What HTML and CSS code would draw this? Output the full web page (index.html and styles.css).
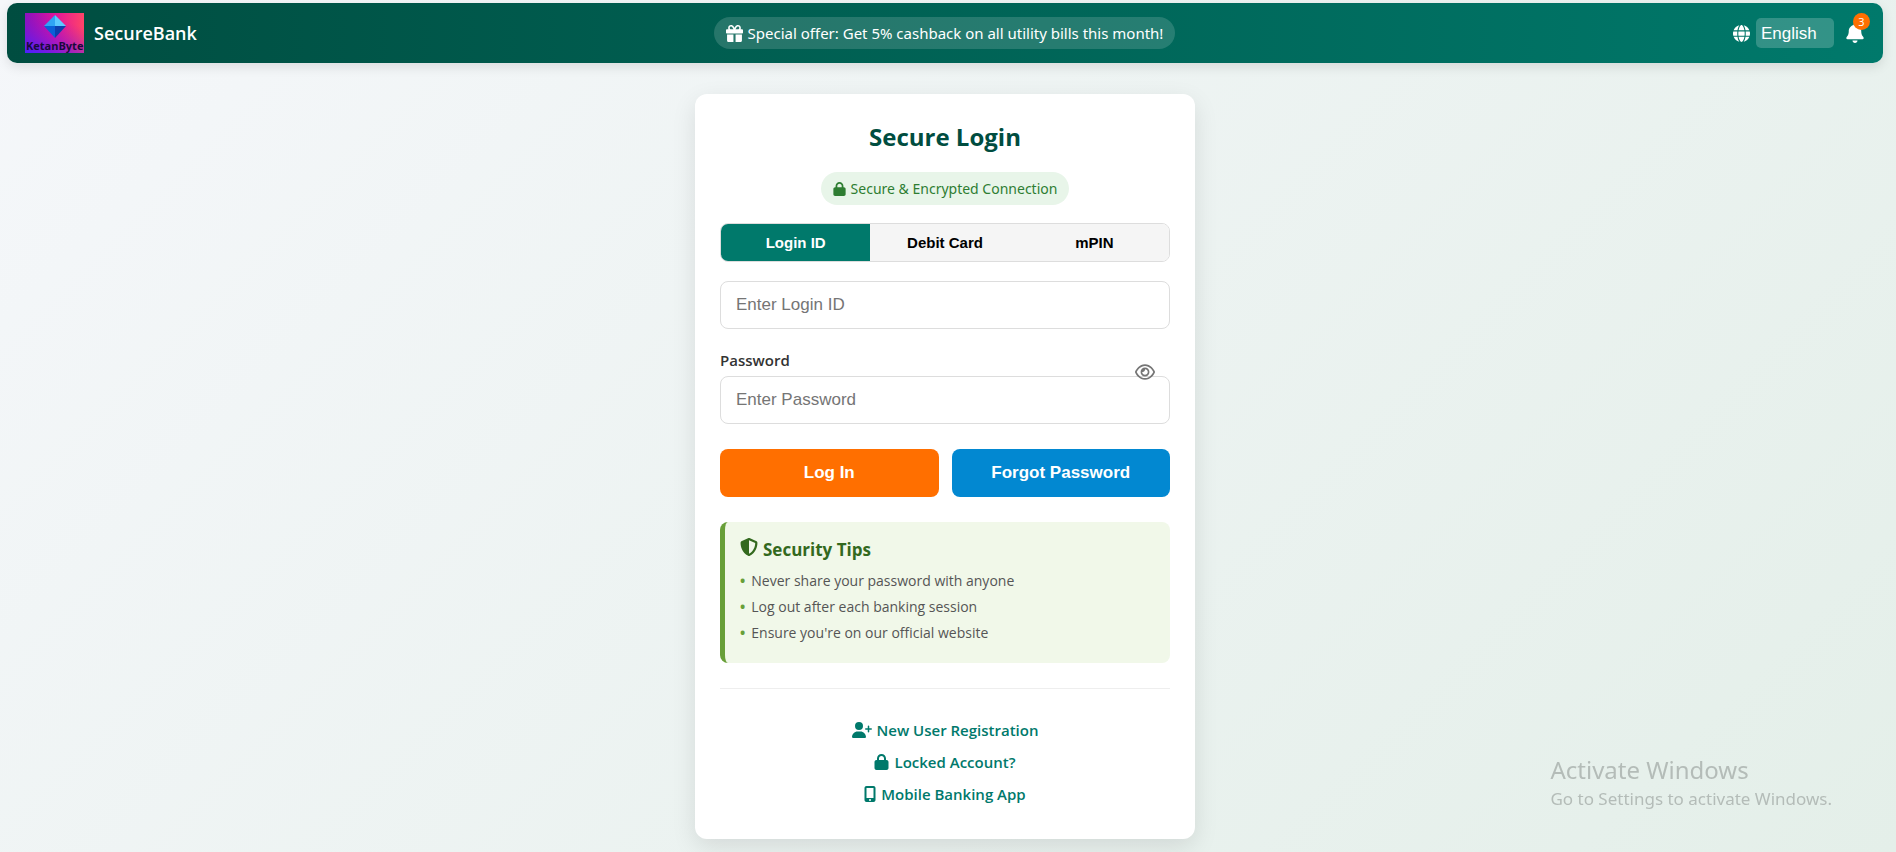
FILE: index.html
```html
<!DOCTYPE html>
<html lang="en">
<head>
    <meta charset="UTF-8">
    <meta name="viewport" content="width=device-width, initial-scale=1.0">
    <title>SecureBank - Login</title>
    <link rel="stylesheet" href="styles.css">
</head>
<body>
    <header class="header">
        <div class="brand">
            <svg class="logo" viewBox="0 0 59 40" role="img" aria-label="KetanByte">
                <defs>
                    <linearGradient id="logo-bg" x1="0" y1="0" x2="1" y2="0">
                        <stop offset="0" stop-color="#8a12b8"/>
                        <stop offset="0.5" stop-color="#e0139c"/>
                        <stop offset="1" stop-color="#ff4468"/>
                    </linearGradient>
                    <linearGradient id="logo-shade" x1="0" y1="1" x2="0.6" y2="0">
                        <stop offset="0" stop-color="#4a22ff"/>
                        <stop offset="0.9" stop-color="#a010c8" stop-opacity="0"/>
                    </linearGradient>
                </defs>
                <rect width="59" height="40" fill="url(#logo-bg)"/>
                <rect width="59" height="40" fill="url(#logo-shade)"/>
                <path d="M30 2L19 13H30Z" fill="#2fa4f5"/>
                <path d="M30 2L41 13H30Z" fill="#5cc8ff"/>
                <path d="M19 13L30 25V13Z" fill="#0a5fd8"/>
                <path d="M41 13L30 25V13Z" fill="#0c3fae"/>
                <text class="logo-text" x="1" y="37">KetanByte</text>
            </svg>
            <span class="brand-name">SecureBank</span>
        </div>
        <div class="offer">
            <svg class="icon" viewBox="0 0 512 512" aria-hidden="true"><path d="M190.500 68.800L225.300 128H224 152c-22.100 0-40-17.900-40-40s17.900-40 40-40h2.200c14.900 0 28.800 7.900 36.300 20.800zM64 88c0 14.400 3.500 28 9.600 40H32c-17.700 0-32 14.300-32 32v64c0 17.700 14.300 32 32 32H480c17.700 0 32-14.300 32-32V160c0-17.700-14.300-32-32-32H438.400c6.100-12 9.600-25.600 9.600-40c0-48.600-39.400-88-88-88h-2.200c-31.900 0-61.500 16.900-77.700 44.400L256 85.500l-24.100-41C215.700 16.900 186.100 0 154.200 0H152C103.400 0 64 39.400 64 88zm336 0c0 22.100-17.900 40-40 40H288h-1.300l34.800-59.200C329.100 55.900 342.900 48 357.800 48H360c22.100 0 40 17.900 40 40zM32 288V464c0 26.500 21.500 48 48 48H224V288H32zM288 512H432c26.500 0 48-21.500 48-48V288H288V512z"/></svg>
            <span>Special offer: Get 5% cashback on all utility bills this month!</span>
        </div>
        <div class="header-right">
            <svg class="icon" viewBox="0 0 512 512" aria-hidden="true"><path d="M352 256c0 22.200-1.200 43.600-3.300 64H163.300c-2.200-20.400-3.300-41.800-3.300-64s1.200-43.600 3.300-64H348.700c2.200 20.400 3.300 41.800 3.300 64zm28.800-64H503.900c5.300 20.500 8.100 41.900 8.100 64s-2.800 43.500-8.100 64H380.800c2.100-20.600 3.200-42 3.200-64s-1.100-43.400-3.200-64zm112.600-32H376.700c-10-63.900-29.800-117.400-55.300-151.600c78.300 20.700 142 77.500 171.900 151.600zm-149.100 0H167.700c6.100-36.400 15.500-68.600 27-94.700c10.500-23.600 22.200-40.700 33.500-51.500C239.400 3.200 248.700 0 256 0s16.600 3.200 27.800 13.800c11.300 10.800 23 27.900 33.500 51.500c11.600 26 20.900 58.200 27 94.700zm-209 0H18.600C48.600 85.900 112.200 29.100 190.600 8.400C165.100 42.600 145.300 96.100 135.300 160zM8.100 192H131.200c-2.100 20.600-3.200 42-3.200 64s1.100 43.400 3.200 64H8.100C2.800 299.500 0 278.100 0 256s2.800-43.500 8.100-64zM194.700 446.600c-11.600-26-20.900-58.200-27-94.600H344.300c-6.100 36.400-15.500 68.600-27 94.600c-10.500 23.600-22.200 40.700-33.500 51.500C272.600 508.800 263.300 512 256 512s-16.600-3.200-27.800-13.800c-11.300-10.800-23-27.900-33.500-51.500zM135.300 352c10 63.900 29.800 117.400 55.300 151.600C112.200 482.900 48.600 426.100 18.600 352H135.300zm358.100 0c-30 74.100-93.600 130.900-171.900 151.600c25.500-34.200 45.200-87.700 55.300-151.600H493.400z"/></svg>
            <select class="language" aria-label="Language">
                <option>English</option>
                <option>Hindi</option>
            </select>
            <button class="bell" type="button" aria-label="Notifications">
                <svg class="bell-icon" viewBox="0 0 448 512" aria-hidden="true"><path d="M224 0c-17.700 0-32 14.300-32 32V51.200C119 66 64 130.600 64 208v18.800c0 47-17.300 92.400-48.500 127.600l-7.400 8.300c-8.400 9.400-10.400 22.900-5.300 34.400S19.400 416 32 416H416c12.600 0 24-7.400 29.200-18.900s3.100-25-5.300-34.400l-7.400-8.300C401.300 319.200 384 273.900 384 226.800V208c0-77.400-55-142-128-156.800V32c0-17.700-14.300-32-32-32zm45.300 493.300c12-12 18.700-28.300 18.700-45.300H160c0 17 6.700 33.300 18.700 45.300s28.300 18.700 45.300 18.700s33.300-6.700 45.300-18.700z"/></svg>
                <span class="badge">3</span>
            </button>
        </div>
    </header>

    <main class="card">
        <h1 class="title">Secure Login</h1>
        <div class="secure-badge">
            <svg class="icon-lock" viewBox="0 0 448 512" aria-hidden="true"><path d="M144 144v48H304V144c0-44.200-35.800-80-80-80s-80 35.800-80 80zM80 192V144C80 64.500 144.500 0 224 0s144 64.500 144 144v48h16c35.300 0 64 28.700 64 64V448c0 35.300-28.700 64-64 64H64c-35.300 0-64-28.700-64-64V256c0-35.300 28.700-64 64-64H80z"/></svg>
            <span>Secure &amp; Encrypted Connection</span>
        </div>

        <div class="tabs">
            <button class="tab active" type="button">Login ID</button>
            <button class="tab" type="button">Debit Card</button>
            <button class="tab" type="button">mPIN</button>
        </div>

        <form class="login-form">
            <input class="field" type="text" id="login-id" placeholder="Enter Login ID" aria-label="Login ID">
            <div class="password-group">
                <label class="label" for="password">Password</label>
                <input class="field" type="password" id="password" placeholder="Enter Password">
                <button class="toggle-password" type="button" aria-label="Show password">
                    <svg class="eye-icon" viewBox="0 0 576 512" aria-hidden="true"><path d="M288 80c-65.200 0-118.800 29.600-159.900 67.700C89.600 183.500 63 226 49.400 256c13.600 30 40.200 72.500 78.600 108.300C169.200 402.400 222.800 432 288 432s118.800-29.600 159.900-67.700C486.400 328.500 513 286 526.600 256c-13.600-30-40.200-72.500-78.600-108.300C406.800 109.600 353.200 80 288 80zM95.400 112.600C142.500 68.800 207.200 32 288 32s145.500 36.800 192.600 80.600c46.800 43.500 78.100 95.400 93 131.100c3.300 7.900 3.300 16.700 0 24.600c-14.900 35.700-46.200 87.700-93 131.100C433.500 443.200 368.800 480 288 480s-145.500-36.800-192.600-80.600C48.600 356 17.300 304 2.500 268.300c-3.300-7.900-3.300-16.700 0-24.600C17.300 208 48.600 156 95.400 112.600zM288 336c44.200 0 80-35.800 80-80s-35.800-80-80-80c-.7 0-1.300 0-2 0c1.300 5.100 2 10.500 2 16c0 35.300-28.700 64-64 64c-5.500 0-10.900-.7-16-2c0 .7 0 1.300 0 2c0 44.200 35.800 80 80 80zm0-208a128 128 0 1 1 0 256 128 128 0 1 1 0-256z"/></svg>
                </button>
            </div>
            <div class="buttons">
                <button class="btn btn-login" type="submit">Log In</button>
                <button class="btn btn-forgot" type="button">Forgot Password</button>
            </div>
        </form>

        <section class="tips">
            <h2 class="tips-title">
                <svg class="shield-icon" viewBox="0 0 512 512" aria-hidden="true"><path d="M256 0c4.600 0 9.200 1 13.400 2.900L457.700 82.800c22 9.300 38.400 31 38.300 57.200c-.5 99.200-41.300 280.700-213.600 363.200c-16.700 8-36.100 8-52.800 0C57.300 420.700 16.500 239.200 16 140c-.1-26.200 16.300-47.900 38.300-57.200L242.700 2.900C246.800 1 251.400 0 256 0zm0 66.800V444.800C394 378 431.100 230.100 432 141.400L256 66.800l0 0z"/></svg>
                <span>Security Tips</span>
            </h2>
            <ul class="tips-list">
                <li>Never share your password with anyone</li>
                <li>Log out after each banking session</li>
                <li>Ensure you're on our official website</li>
            </ul>
        </section>

        <nav class="links">
            <a href="#">
                <svg class="icon-wide" viewBox="0 0 640 512" aria-hidden="true"><path d="M96 128a128 128 0 1 1 256 0A128 128 0 1 1 96 128zM0 482.300C0 383.800 79.800 304 178.300 304h91.400C368.200 304 448 383.800 448 482.300c0 16.400-13.300 29.700-29.700 29.700H29.700C13.300 512 0 498.700 0 482.300zM504 312V248H440c-13.300 0-24-10.700-24-24s10.700-24 24-24h64V136c0-13.300 10.700-24 24-24s24 10.700 24 24v64h64c13.300 0 24 10.700 24 24s-10.700 24-24 24H552v64c0 13.300-10.700 24-24 24s-24-10.700-24-24z"/></svg>
                <span>New User Registration</span>
            </a>
            <a href="#">
                <svg class="icon-narrow" viewBox="0 0 448 512" aria-hidden="true"><path d="M144 144v48H304V144c0-44.200-35.800-80-80-80s-80 35.800-80 80zM80 192V144C80 64.500 144.500 0 224 0s144 64.500 144 144v48h16c35.300 0 64 28.700 64 64V448c0 35.300-28.700 64-64 64H64c-35.300 0-64-28.700-64-64V256c0-35.300 28.700-64 64-64H80z"/></svg>
                <span>Locked Account?</span>
            </a>
            <a href="#">
                <svg class="icon-phone" viewBox="0 0 384 512" aria-hidden="true"><path d="M16 64C16 28.700 44.700 0 80 0H304c35.300 0 64 28.700 64 64V448c0 35.300-28.700 64-64 64H80c-35.300 0-64-28.700-64-64V64zM224 448a32 32 0 1 0-64 0 32 32 0 1 0 64 0zM304 64H80V384H304V64z"/></svg>
                <span>Mobile Banking App</span>
            </a>
        </nav>
    </main>

    <aside class="watermark">
        <p class="watermark-title">Activate Windows</p>
        <p class="watermark-text">Go to Settings to activate Windows.</p>
    </aside>
</body>
</html>
```
FILE: styles.css
```css
* {
    box-sizing: border-box;
}
body {
    font-family: "Open Sans", "Noto Sans", sans-serif;
    background: linear-gradient(135deg, #f5f7fa 0%, #e4efe9 100%);
    min-height: 100vh;
    margin: 0;
    padding: 3px 13px 13px 7px;
    color: #333;
}
svg {
    fill: currentColor;
    flex-shrink: 0;
}
.header {
    display: grid;
    grid-template-columns: 1fr auto 1fr;
    align-items: center;
    height: 60px;
    padding: 0 19px 0 18px;
    border-radius: 10px;
    background: linear-gradient(90deg, #004d40, #00796b);
    color: #fff;
    box-shadow: 0 4px 12px rgba(0, 0, 0, 0.1);
}
.brand {
    display: flex;
    align-items: center;
    gap: 10px;
}
.logo {
    width: 59px;
    height: 40px;
}
.logo-text {
    font-family: "Open Sans", sans-serif;
    font-size: 11px;
    font-weight: 700;
    fill: #1a0a3c;
}
.brand-name {
    font-size: 18px;
    font-weight: 600;
}
.offer {
    display: flex;
    align-items: center;
    gap: 5px;
    height: 32px;
    padding: 0 12px;
    border-radius: 20px;
    background: rgba(255, 255, 255, 0.15);
    font-family: "Noto Sans", sans-serif;
    font-size: 15px;
}
.icon {
    width: 17px;
    height: 17px;
}
.header-right {
    display: flex;
    justify-content: flex-end;
    align-items: center;
    gap: 6px;
}
.language {
    appearance: none;
    width: 78px;
    height: 30px;
    padding: 0 5px;
    border: none;
    border-radius: 5px;
    background: rgba(255, 255, 255, 0.2);
    color: #fff;
    font-family: "Liberation Sans", Arial, sans-serif;
    font-size: 17px;
}
.language option {
    color: #333;
}
.bell {
    position: relative;
    display: flex;
    margin-left: 6px;
    padding: 0;
    border: none;
    background: none;
    color: #fff;
    cursor: pointer;
}
.bell-icon {
    width: 18px;
    height: 20px;
}
.badge {
    position: absolute;
    top: -10px;
    right: -6px;
    width: 17px;
    height: 17px;
    border-radius: 50%;
    background: #ff6f00;
    font-family: "Open Sans", sans-serif;
    font-size: 11px;
    line-height: 17px;
    text-align: center;
}
.card {
    display: flex;
    flex-direction: column;
    max-width: 500px;
    margin: 31px auto 0;
    padding: 25px;
    border-radius: 12px;
    background: #fff;
    box-shadow: 0 8px 24px rgba(0, 0, 0, 0.1);
}
.title {
    margin: 0 0 18px;
    color: #004d40;
    font-size: 24px;
    font-weight: 700;
    line-height: 35px;
    text-align: center;
}
.secure-badge {
    display: flex;
    align-items: center;
    align-self: center;
    gap: 5px;
    height: 33px;
    margin-bottom: 18px;
    padding: 0 12px;
    border-radius: 20px;
    background: #e8f5e9;
    color: #2e7d32;
    font-family: "Noto Sans", sans-serif;
    font-size: 14px;
}
.icon-lock {
    width: 13px;
    height: 14px;
}
.tabs {
    display: flex;
    height: 39px;
    margin-bottom: 19px;
    overflow: hidden;
    border: 1px solid #ddd;
    border-radius: 8px;
}
.tab {
    flex: 1;
    border: none;
    background: #f5f5f5;
    color: #000;
    font-family: "Liberation Sans", Arial, sans-serif;
    font-size: 15px;
    font-weight: 700;
    cursor: pointer;
}
.tab.active {
    background: #00796b;
    color: #fff;
}
.field {
    display: block;
    width: 100%;
    height: 48px;
    padding: 0 15px;
    border: 1px solid #ddd;
    border-radius: 8px;
    background: #fff;
    font-family: "Liberation Sans", Arial, sans-serif;
    font-size: 17px;
}
.field::placeholder {
    color: #757575;
}
.password-group {
    position: relative;
    margin: 20px 0 25px;
}
.label {
    display: block;
    height: 27px;
    font-size: 15px;
    font-weight: 600;
    line-height: 22px;
}
.toggle-password {
    position: absolute;
    top: 14px;
    right: 15px;
    display: flex;
    padding: 0;
    border: none;
    background: none;
    color: #757575;
    cursor: pointer;
}
.eye-icon {
    width: 20px;
    height: 18px;
}
.buttons {
    display: flex;
    gap: 13px;
}
.btn {
    flex: 1;
    height: 48px;
    padding: 0;
    border: none;
    border-radius: 8px;
    color: #fff;
    font-family: "Liberation Sans", Arial, sans-serif;
    font-size: 17px;
    font-weight: 700;
    cursor: pointer;
}
.btn-login {
    background: #ff6f00;
}
.btn-forgot {
    background: #0288d1;
}
.tips {
    margin-top: 25px;
    padding: 15px 15px 17px;
    border-left: 5px solid #689f38;
    border-radius: 8px;
    background: #f1f8e9;
}
.tips-title {
    display: flex;
    gap: 5px;
    margin: 0 0 5px;
    color: #33691e;
    font-size: 17px;
    font-weight: 700;
    line-height: 26px;
}
.shield-icon {
    width: 18px;
    height: 20px;
}
.tips-list {
    margin: 0;
    padding: 0;
    list-style: none;
    color: #555;
    font-size: 14px;
    line-height: 26px;
}
.tips-list li {
    display: flex;
    gap: 6px;
}
.tips-list li::before {
    content: "•";
    color: #689f38;
    font-weight: 700;
}
.links {
    display: flex;
    flex-direction: column;
    align-items: center;
    gap: 8px;
    margin-top: 25px;
    padding: 29px 0 8px;
    border-top: 1px solid #eee;
}
.links a {
    display: flex;
    align-items: center;
    gap: 5px;
    color: #00796b;
    font-size: 15px;
    font-weight: 600;
    line-height: 24px;
    text-decoration: none;
}
.icon-wide {
    width: 20px;
    height: 16px;
}
.icon-narrow {
    width: 15px;
    height: 16px;
}
.icon-phone {
    width: 12px;
    height: 16px;
}
.watermark {
    position: fixed;
    right: 64px;
    bottom: 40px;
    color: #b4bcb8;
    font-family: "Noto Sans", sans-serif;
}
.watermark-title {
    margin: 0;
    font-size: 24px;
    line-height: 32px;
}
.watermark-text {
    margin: 0;
    font-size: 17px;
    line-height: 26px;
}
```
